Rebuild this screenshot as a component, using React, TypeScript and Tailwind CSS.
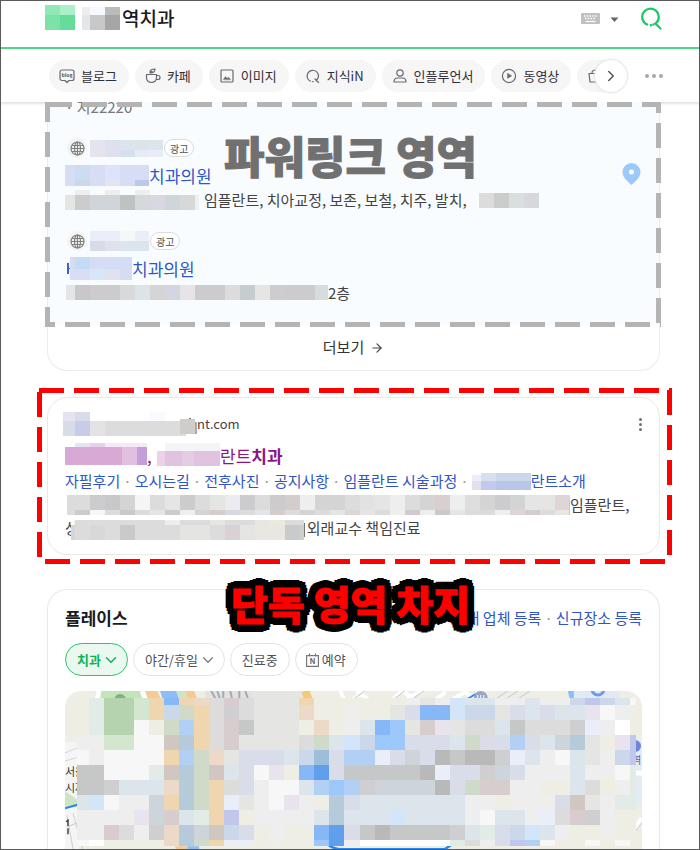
import React from "react";
import { ArrowRight, ChevronDown, ChevronRight } from "lucide-react";

type Block = [number, number, number, number, string];

function Mosaic({ w, h, blocks, className = "" }: { w: number; h: number; blocks: Block[]; className?: string }) {
  return (
    <svg width={w} height={h} className={"shrink-0 " + className} shapeRendering="crispEdges" aria-hidden="true">
      {blocks.map(([x, y, bw, bh, fill], i) => (
        <rect key={i} x={x} y={y} width={bw} height={bh} fill={fill} />
      ))}
    </svg>
  );
}

/* Turns a list of colours into 15px wide cells of one strip. */
function strip(colors: string[], y: number, h: number, first = 15): Block[] {
  return colors.map((c, i) => [i === 0 ? 0 : first + (i - 1) * 15, y, i === 0 ? first : 15, h, c]);
}

const stroke = { fill: "none", stroke: "#666a70", strokeWidth: 1.2, strokeLinecap: "round", strokeLinejoin: "round" } as const;

const BlogIcon = () => (
  <svg width="16" height="16" viewBox="0 0 16 16" {...stroke}>
    <path d="M3 2h10a2 2 0 0 1 2 2v6.500a2 2 0 0 1-2 2h-3L8 14.500 6 12.500H3a2 2 0 0 1-2-2V4a2 2 0 0 1 2-2z" />
    <text x="8" y="9" textAnchor="middle" fontSize="5" fontWeight="700" fill="#555" stroke="none">blog</text>
  </svg>
);
const CafeIcon = () => (
  <svg width="16" height="16" viewBox="0 0 16 16" {...stroke}>
    <path d="M1.500 6.500h10v3.500a5 4.500 0 0 1-10 0zM11.500 7.500h1.500a1.800 1.800 0 0 1 0 4h-1.800M5 4.800c-.5-2.500 1.500-4 5-3.800 0 2.600-1.600 3.900-5 3.800zM5 4.800l2-1.600" />
  </svg>
);
const ImageIcon = () => (
  <svg width="16" height="16" viewBox="0 0 16 16" {...stroke}>
    <rect x="2" y="2" width="12" height="12" rx="1" />
    <path d="M4.500 11.500l2-3 1.500 2 1.500-1.200 2 2.200z" fill="#666a70" strokeWidth="0.500" />
  </svg>
);
const KinIcon = () => (
  <svg width="16" height="16" viewBox="0 0 16 16" {...stroke}>
    <path d="M5.500 13.200a5.700 5.700 0 1 1 5.600-.6M10 11l3.500 3.500M7.600 13.600h.6" />
  </svg>
);
const PersonIcon = () => (
  <svg width="16" height="16" viewBox="0 0 16 16" {...stroke}>
    <circle cx="8" cy="5" r="3.200" />
    <path d="M5.500 10h5c2 0 3.500 1.500 3.500 4H2c0-2.500 1.500-4 3.500-4z" />
  </svg>
);
const VideoIcon = () => (
  <svg width="16" height="16" viewBox="0 0 16 16" {...stroke}>
    <circle cx="8" cy="8" r="6.600" />
    <path d="M6.700 5.800v4.400L10.300 8z" fill="#666a70" strokeWidth="0.800" />
  </svg>
);
const BagIcon = () => (
  <svg width="16" height="16" viewBox="0 0 16 16" {...stroke}>
    <path d="M2 5.500h12L13 14H3zM5 5.500C5 2.500 6.500 2 8 2s3 .5 3 3.500" />
  </svg>
);

const tabs = [
  { label: "블로그", icon: <BlogIcon /> },
  { label: "카페", icon: <CafeIcon /> },
  { label: "이미지", icon: <ImageIcon /> },
  { label: "지식iN", icon: <KinIcon /> },
  { label: "인플루언서", icon: <PersonIcon /> },
  { label: "동영상", icon: <VideoIcon /> },
];

function Header() {
  return (
    <header className="relative z-10 bg-white shadow-[0_2px_2px_#e3e3e8]">
      <form className="flex h-12 items-start border-b-2 border-[#4fd88a] pl-11 pr-[37px]" onSubmit={(e) => e.preventDefault()}>
        <Mosaic
          w={30}
          h={25}
          className="mt-1"
          blocks={[[0, 0, 15, 10, "#8fe8b5"], [15, 0, 15, 10, "#aaf0c8"], [0, 10, 15, 15, "#7be3a7"], [15, 10, 15, 15, "#66dc9b"]]}
        />
        <Mosaic
          w={38}
          h={23}
          className="ml-[7px] mt-1.5"
          blocks={[[0, 0, 8, 8, "#eeeeee"], [8, 0, 15, 8, "#f6f9fd"], [23, 0, 15, 8, "#bbbbbb"], [0, 8, 8, 15, "#e4e6ea"], [8, 8, 15, 15, "#c7c9c8"], [23, 8, 15, 15, "#a6a6a6"]]}
        />
        <input
          aria-label="검색어"
          defaultValue="역치과"
          className="ml-0.5 h-8 min-w-0 flex-1 bg-transparent text-[19px] font-medium text-[#1a1a22] outline-none"
        />
        <button type="button" aria-label="키보드" className="mt-3">
          <svg width="19" height="11" viewBox="0 0 19 11">
            <rect width="19" height="11" rx="1" fill="#c0c0c0" />
            <path d="M3 3h13M4 5.500h11" stroke="#fff" strokeWidth="1.300" strokeDasharray="1.500 1.300" />
            <path d="M4.500 8.500h10" stroke="#fff" strokeWidth="1.200" />
          </svg>
        </button>
        <button type="button" aria-label="자동완성" className="ml-2.5 mt-4">
          <svg width="9" height="6" viewBox="0 0 9 6"><path d="M.5 .5h8L4.500 5z" fill="#666" /></svg>
        </button>
        <button type="submit" aria-label="검색" className="ml-[21px] mt-1.5">
          <svg width="23" height="23" viewBox="0 0 23 23" fill="none" stroke="#1bc963" strokeWidth="2.200" strokeLinecap="round">
            <path d="M7.200 17.600A8.300 8.300 0 1 1 15.500 16.600L20.500 21.500" />
            <path d="M10.800 18.200h.1M13.400 17.600h.1" strokeWidth="2.500" />
          </svg>
        </button>
      </form>
      <nav className="flex h-[53px] items-center pl-12 pr-[37px]">
        <div className="flex min-w-0 flex-1 gap-1.5 overflow-hidden">
          {tabs.map((t) => (
            <a key={t.label} href="#" className="flex h-8 shrink-0 items-center gap-1.5 whitespace-nowrap rounded-full bg-[#f6f6f7] pl-2.5 pr-3 text-[13px] text-[#303038]">
              {t.icon}
              {t.label}
            </a>
          ))}
          <a href="#" aria-label="쇼핑" className="flex h-8 w-20 shrink-0 items-center rounded-full bg-[#f6f6f7] pl-2.5">
            <BagIcon />
          </a>
        </div>
        <button aria-label="다음" className="relative -ml-4 flex h-8 w-8 shrink-0 items-center justify-center rounded-full bg-white shadow-[0_0_2px_1px_#e2e3e8]">
          <ChevronRight size={18} color="#555" />
        </button>
        <button aria-label="더보기 메뉴" className="ml-[18px] flex shrink-0 gap-[3px]">
          <span className="h-1 w-1 rounded-full bg-[#a8a8ac]" />
          <span className="h-1 w-1 rounded-full bg-[#a8a8ac]" />
          <span className="h-1 w-1 rounded-full bg-[#a8a8ac]" />
        </button>
      </nav>
    </header>
  );
}

/* Dashed outline laid over a section: 25px dashes with 10px gaps. */
function DashFrame({ color, offsets }: { color: string; offsets: [number, number, number, number] }) {
  const common = { stroke: color, strokeWidth: 10, strokeDasharray: "25 10" };
  const [top, right, bottom, left] = offsets;
  return (
    <svg className="block" width="100%" height="100%" aria-hidden="true">
      <line x1="0" y1="0" x2="100%" y2="0" {...common} strokeDashoffset={top} />
      <line x1="100%" y1="0" x2="100%" y2="100%" {...common} strokeDashoffset={right} />
      <line x1="0" y1="100%" x2="100%" y2="100%" {...common} strokeDashoffset={bottom} />
      <line x1="0" y1="0" x2="0" y2="100%" {...common} strokeDashoffset={left} />
    </svg>
  );
}

function Globe() {
  return (
    <span className="flex h-5 w-5 items-center justify-center rounded-full bg-[#f3f3f3]">
      <svg width="15" height="15" viewBox="0 0 15 15" fill="none" stroke="#808080" strokeWidth="1.200">
        <circle cx="7.500" cy="7.500" r="6.500" />
        <ellipse cx="7.500" cy="7.500" rx="3" ry="6.500" />
        <path d="M7.500 1v13M1 7.500h13M2 4.500h11M2 10.500h11" />
      </svg>
    </span>
  );
}

function AdBadge() {
  return <span className="ml-px flex h-[18px] items-center rounded-full border border-[#dcdcdc] bg-white px-[5px] text-[10px] text-[#505050]">광고</span>;
}

function PowerLink() {
  return (
    <section className="relative z-20 rounded-b-[20px] border border-t-0 border-[#ececee]">
      <div className="relative flow-root h-[223px] overflow-hidden bg-[#f9fcff] pl-[17px] pr-4">
        <p className="-mt-1.5 text-[15px] leading-[22px] text-[#777]">· 지22220</p>
        <div className="flex items-center">
          <div className="min-w-0 flex-1 pt-[20px]">
            <div className="flex h-5 items-center pl-0.5">
              <Globe />
              <Mosaic
                w={73}
                h={17}
                className="ml-[3px]"
                blocks={[[0, 0, 15, 17, "#e5e3ee"], [15, 0, 16, 17, "#dde1ee"], [31, 0, 14, 10, "#dce5ed"], [31, 10, 14, 7, "#d5e0ea"], [45, 0, 15, 10, "#dde4e7"], [45, 10, 15, 7, "#e6ebf6"], [60, 0, 13, 10, "#dce5ed"], [60, 10, 13, 7, "#e8edf7"]]}
              />
              <AdBadge />
            </div>
            <a href="#" className="mt-[5px] flex h-[26px] items-center text-[17px] text-[#2f55c8]">
              <Mosaic
                w={84}
                h={21}
                className="mb-0.5"
                blocks={[[0, 0, 85, 21, "#d6ddf5"], [10, 0, 15, 15, "#cbdcf3"], [10, 15, 15, 6, "#cbd8e8"], [40, 0, 15, 15, "#dde3f8"], [40, 15, 15, 6, "#e6e3f0"], [70, 15, 15, 6, "#bdc9ec"]]}
              />
              치과의원
            </a>
            <p className="flex h-[22px] items-center whitespace-nowrap text-[15px] text-[#444]">
              <Mosaic
                w={135}
                h={20}
                className="mb-px"
                blocks={[...strip(["#e5e5e3", "#cccccd", "#cfd5d8", "#cfd5d8", "#bec2c1", "#d4d9da", "#d8d8e2", "#cfd5d8", "#d8d8d8"], 5, 15, 10), [130, 5, 4, 15, "#efefef"], [10, 0, 15, 5, "#eeeeee"], [40, 0, 15, 5, "#eeeeee"], [70, 0, 15, 5, "#eeeeee"]]}
              />
              <span className="ml-1 mr-3">임플란트, 치아교정, 보존, 보철, 치주, 발치,</span>
              <Mosaic w={60} h={15} blocks={strip(["#dcdcdd", "#cccccd", "#d9dede", "#d8d7de"], 0, 15)} />
            </p>
            <div className="mt-[20px] flex h-5 items-center pl-0.5">
              <Globe />
              <Mosaic
                w={59}
                h={20}
                className="ml-[3px]"
                blocks={[[0, 0, 59, 10, "#e9eef8"], [30, 0, 15, 10, "#f4f8f8"], [0, 10, 15, 10, "#d8dce9"], [15, 10, 15, 10, "#dfe1ed"], [30, 10, 29, 10, "#dce5ed"]]}
              />
              <AdBadge />
            </div>
            <a href="#" className="mt-[5px] flex h-[26px] items-center text-[17px] text-[#2f55c8]">
              <Mosaic
                w={67}
                h={23}
                className="mb-0.5"
                blocks={[[2, 6, 2, 11, "#3a60cf"], [4, 11, 2, 1, "#3a60cf"], [5, 0, 62, 23, "#d5dcf6"], [10, 0, 15, 12, "#c5daf5"], [5, 12, 20, 11, "#d9ddf5"], [25, 12, 15, 11, "#d6e7fa"], [40, 12, 15, 11, "#e2e1f0"]]}
              />
              치과의원
            </a>
            <p className="flex h-[22px] items-center whitespace-nowrap text-[15px] text-[#444]">
              <Mosaic
                w={262}
                h={15}
                className="mb-0.5 ml-px"
                blocks={strip(["#e3e5e6", "#c8c8ca", "#cccccf", "#cccccf", "#d7d9da", "#dde4e9", "#d5d5d5", "#d3d5e0", "#e6e4e8", "#cccccf", "#cccccf", "#dcdcdd", "#c5cdd1", "#e5e5e4", "#cdcdcf", "#cccccf", "#cccccf", "#d6dcdf"], 0, 15, 9)}
              />
              2층
            </p>
          </div>
          <svg width="19" height="22" viewBox="0 0 19 22" className="mb-[75px] mr-0.5 shrink-0">
            <path d="M9.500 0a9 9 0 0 1 9 9c0 5-4 8.500-9 13C4.500 17.500.5 14 .5 9a9 9 0 0 1 9-9z" fill="#9cc8fa" />
            <circle cx="9.500" cy="9" r="2.500" fill="#fff" />
          </svg>
        </div>
        <h2 className="absolute inset-x-0 top-[21px] whitespace-nowrap pr-1.5 text-center text-[44px] font-black leading-[64px] text-[#707070] [-webkit-text-stroke:1px_#707070]">
          파워링크 영역
        </h2>
      </div>
      <a href="#" className="flex h-[45px] items-center justify-center gap-1.5 text-[15px] text-[#333]">
        더보기 <ArrowRight size={14} color="#444" />
      </a>
      <div className="pointer-events-none absolute -left-[3px] -right-0.5 top-0 h-[225px] overflow-hidden">
        <DashFrame color="#b4b4b4" offsets={[33, 14, 15, 5]} />
      </div>
    </section>
  );
}

const sub = "text-[#2f55c8]";

function SiteResult() {
  return (
    <section className="relative mt-[26px] rounded-[20px] border border-[#e9e9ec] pb-[14px] pl-[17px] pr-4 pt-4">
      <div className="flex h-5 items-center text-[13px] text-[#444]">
        <Mosaic
          w={134}
          h={24}
          className="-ml-0.5"
          blocks={[[0, 0, 12, 9, "#e5e3ee"], [12, 0, 15, 9, "#d8dce9"], [87, 0, 15, 9, "#f7fbff"], [0, 9, 12, 15, "#d8dce9"], [12, 9, 15, 15, "#c9cce8"], [27, 9, 15, 15, "#e3e3e3"], [42, 9, 81, 15, "#dcdcdc"], [117, 7, 15, 15, "#cfccca"], [132, 10, 2, 12, "#aaaaaa"], [126, 6, 2, 1, "#777777"]]}
        />
        nt.com
        <button aria-label="메뉴" className="ml-auto mr-px flex flex-col gap-0.5">
          <span className="h-[3px] w-[3px] rounded-full bg-[#707070]" />
          <span className="h-[3px] w-[3px] rounded-full bg-[#707070]" />
          <span className="h-[3px] w-[3px] rounded-full bg-[#707070]" />
        </button>
      </div>
      <a href="#" className="mt-[9px] flex h-[26px] items-center text-[17px] text-[#8b1585]">
        <Mosaic
          w={82}
          h={22}
          className="mb-1"
          blocks={[[10, 0, 15, 4, "#e6e3f2"], [25, 0, 15, 4, "#e8d0ea"], [40, 0, 42, 4, "#f6e9f5"], [0, 4, 82, 18, "#d9a9d6"], [57, 4, 15, 18, "#e0bfe0"], [72, 4, 10, 18, "#c29fdb"]]}
        />
        <span className="w-[10px]">,</span>
        <Mosaic
          w={63}
          h={23}
          className="mb-1"
          blocks={[[8, 0, 55, 8, "#f5f4f6"], [0, 8, 63, 15, "#e0c2e1"], [0, 8, 8, 15, "#edd0ea"], [25, 8, 12, 15, "#e4cce5"]]}
        />
        란트<b>치과</b>
      </a>
      <div className={"flex h-6 items-center gap-[3px] whitespace-nowrap text-[15px] " + sub}>
        <a href="#">자필후기</a>
        <i className="text-[#999] not-italic">·</i>
        <a href="#">오시는길</a>
        <i className="text-[#999] not-italic">·</i>
        <a href="#">전후사진</a>
        <i className="text-[#999] not-italic">·</i>
        <a href="#">공지사항</a>
        <i className="text-[#999] not-italic">·</i>
        <a href="#">임플란트 시술과정</a>
        <i className="text-[#999] not-italic">·</i>
        <a href="#" className="flex items-center">
          <Mosaic
            w={59}
            h={17}
            blocks={[[0, 2, 9, 6, "#e9eef8"], [9, 0, 15, 8, "#d8e0f0"], [24, 0, 35, 8, "#cbd7ec"], [0, 8, 9, 9, "#e3e1ec"], [9, 8, 15, 9, "#c3c9ec"], [24, 8, 35, 9, "#b8c6e8"]]}
          />
          란트소개
        </a>
      </div>
      <p className="flex h-6 items-center whitespace-nowrap text-[15px] text-[#444]">
        <Mosaic
          w={503}
          h={20}
          className="ml-0.5"
          blocks={[
            ...strip(["#dcdcdd", "#dcdcdd", "#cccccf", "#c6c8c9", "#d4d4d4", "#f5f5f5", "#dcdcdd", "#e5e5e3", "#cccccf", "#dcdcdd", "#e5e5e3", "#ececf0", "#cccccf", "#dcdcdd", "#cccccf", "#d5cccc", "#eeeeee", "#d4d4d4", "#d4d4d4", "#dcdcdd", "#e2e2e2", "#e5e5e3", "#eeeeee", "#dcdcdd", "#d4d4d4", "#dacfcf", "#eeeeee", "#dedede", "#d4d4d4", "#cccccf", "#d4d4d4", "#e5e5e5", "#e5e5e3", "#ddd5d6"], 0, 15, 8),
            ...strip(["#dcdcdd", "#cccccf", "#f6f6f6", "#dcdcdd", "#c9c9c9", "#dcdcdd", "#e5e5e3", "#cccccf", "#eeeeee", "#d4d4d4", "#d5cccc", "#d8d8e2", "#dcdcdd", "#e2e5ea", "#d5cccc", "#dcdcdd", "#d4d4d4", "#dcdcdd", "#e5e5e5", "#ddd5d6", "#e5e5e3", "#dcdcdd", "#eeeeee", "#d3c9d3", "#eeeeee", "#c9c9cb", "#e5e5e3", "#dcdcdd", "#dcdcdd", "#eeeeee", "#ddd5d6", "#d5cccc", "#dcdcdd", "#e8e6df"], 15, 5, 8),
            [502, 5, 1, 15, "#9dd8f8"],
          ]}
        />
        임플란트,
      </p>
      <p className="flex h-[23px] items-center whitespace-nowrap text-[15px] text-[#444]">
        상
        <Mosaic
          w={234}
          h={20}
          className="-ml-2 mt-0.5"
          blocks={[
            [0, 5, 4, 15, "#d5d5df"],
            [4, 0, 229, 20, "#dcdcdd"],
            [19, 5, 15, 15, "#d8d8d8"],
            [49, 5, 15, 15, "#c9cac9"],
            [94, 0, 15, 5, "#eeeeee"],
            [109, 5, 30, 15, "#e4e4e2"],
            [139, 0, 15, 5, "#e5e5e3"],
            [154, 5, 15, 15, "#d9d1d3"],
            [169, 5, 15, 15, "#e5e5e3"],
            [184, 0, 30, 20, "#e8e7e2"],
            [199, 0, 15, 5, "#ebebdd"],
            [214, 5, 15, 15, "#c9cacc"],
            [229, 5, 4, 15, "#ccd3c6"],
            [233, 3, 1, 14, "#777777"],
          ]}
        />
        <span className="ml-0.5">외래교수 책임진료</span>
      </p>
      <div className="pointer-events-none absolute -bottom-[10px] -left-[11px] -right-[13px] -top-[10px] z-20 overflow-hidden">
        <DashFrame color="#ff0000" offsets={[33, 33, 27, 31]} />
      </div>
    </section>
  );
}

const palette: Record<string, string> = {
  a: "#eeeeee", b: "#e1ece6", c: "#b5d3ae", d: "#d2e7cd", e: "#f0d6af", f: "#9cc8fc", g: "#cfdbc8", h: "#dcdcdc",
  i: "#cfcfd2", j: "#e5e5e4", k: "#f7f7f7", l: "#dde5ec", m: "#d9dce9", n: "#cbd8ea", o: "#b1d0f4", p: "#86b8f8",
  q: "#609fec", r: "#b6cbd9", s: "#c6c8c7", t: "#b9b9b9", u: "#efeee5", v: "#d0c7c0", w: "#ecd9c8", x: "#d7cdce",
  y: "#e9eef8", z: "#ffffff", A: "#9dbedb", B: "#cdd5da", L: "#d3e6f9", M: "#e8e3ec", P: "#c1c7ea",
};

const mapRows = [
  "ubccdepewhxhjjjeuuuuuuajaLllaalaanPnlk",
  "ubccdengehihjjjwuuauujmppLnnjmlmllMkau",
  "ubcckugoehxsjjjuwualpfjxMjhhlshhhiyazu",
  "aaddkkvrehxjjjjhglLnffmmmlgmmomlBrjuMP",
  "kakkkkeogwjmmmlnAmooymBmtsttiylakljanP",
  "sskkkbvrgvlmkMupqmssssstymmiBmaaalaakb",
  "ssilllwrgehmakklofoiBBBBtmgxxaauulhuab",
  "lLkaaBergeyjakMaurmlllllllaauaaamvjabb",
  "aaaaMBxlbePuaaaalrlllLllllakllayhxiauu",
  "aaxhaiwrBvnmuauupqmstssssilbmnLlauuauu",
  "kzuuuuwrgeyyuauufqazzzzzzbhamPokuukuku",
];
const rowTops = [7, 14, 29, 44, 59, 74, 89, 104, 119, 134, 149, 155];

function MapPreview() {
  return (
    <svg width="576" height="170" className="mt-[15px] w-full rounded-t-2xl" viewBox="0 0 576 170" preserveAspectRatio="xMidYMin slice" fill="none" role="img" aria-label="지도">
      <rect width="576" height="170" fill="#efeee5" />
      <path d="M36 0h40l10 14H34z" fill="#c3e3ba" />
      <circle cx="55" cy="9" r="6" fill="#7fb384" />
      <path d="M31 14 34 0M82 14 77 0" stroke="#fff" strokeWidth="5" />
      <path d="M80 0h12l6 14H85z" fill="#f6ca90" />
      <path d="M95 0h16l5 14H99z" fill="#8dbdf8" />
      <path d="M111 0h9l5 14h-8z" fill="#cde5c2" />
      <path d="M120 0h9l5 14h-9z" fill="#f6ca90" />
      <path d="M140 0h48v12h-48z" fill="#e2e2e2" />
      <path d="M146 0l5 9M152 0l3 9M158 0v9M165 0l2 9M174 0v9M180 0l3 9" stroke="#a9a9ae" strokeWidth="2" />
      <path d="M188 0h50v12h-50z" fill="#e5e5e4" />
      <path d="M240 0l5 14" stroke="#f3c878" strokeWidth="8" />
      <path d="M275 0l4 10M286 10l12-10M291 0l14 10M325 10l12-10 14 10M342 8l14-8M370 9l10-8M384 10l14-8M398 0l12 9" stroke="#fff" strokeWidth="4" />
      <path d="M287 9l12-9M326 10l13-10M344 10l14-10M430 8l12-8M440 8l12-8M452 8l12-8" stroke="#cdcdd0" strokeWidth="1" />
      <path d="M400 9l10-6" stroke="#2488f8" strokeWidth="2" />
      <circle cx="415" cy="7" r="7" fill="#9aa6c5" />
      <path d="M411 8h8M412 4v5M415 4v5M418 4v5" stroke="#fff" />
      <path d="M504 0h50v10h-50z" fill="#e1eaf2" />
      <circle cx="532" cy="-2" r="6" stroke="#6d9aee" strokeWidth="3" />
      <path d="M502 0h6v9h-4z" fill="#8dbdf8" />
      <path d="M0 51h14v119H0z" fill="#f5f5f5" />
      <path d="M0 70l14-4M0 62l14-6" stroke="#d5d5d5" />
      <path d="M0 100l12 8v8H0z" fill="#cde5c2" />
      <path d="M0 117l14-4" stroke="#2488f8" strokeWidth="2" />
      <path d="M2 124l8 45M8 122l12 45M4 135l14-6" stroke="#cfcfcf" />
      <path d="M3 128v7M1 130h2M3 137v6" stroke="#444" strokeWidth="1.500" />
      <text x="0" y="85" fontSize="11" fill="#333">서울</text>
      <text x="0" y="101" fontSize="11" fill="#333">시자</text>
      <path d="M558 50h18v65h-18z" fill="#e3ebf3" />
      <path d="M560 82h16" stroke="#fff" strokeWidth="5" />
      <circle cx="569" cy="55" r="6" fill="#6d86dc" />
      <text x="566" y="73" fontSize="10" fill="#5968b8">역</text>
      <path d="M558 153l18-26" stroke="#fff" strokeWidth="5" />
      <path d="M560 153l16-22" stroke="#ccc" />
      <path d="M110 155h12l4 14h-14z" fill="#f6ca90" />
      <path d="M122 155h12v14h-10z" fill="#8dbdf8" />
      <path d="M262 153q6 5 14 5h103l6-4" stroke="#2488f8" strokeWidth="2.500" />
      <g shapeRendering="crispEdges">
        {mapRows.map((row, r) =>
          row.split("").map((ch, c) => (
            <rect
              key={`${r}-${c}`}
              x={c === 0 ? 12 : 24 + (c - 1) * 15}
              y={rowTops[r]}
              width={c === 0 ? 12 : c === 37 ? 6 : 15}
              height={rowTops[r + 1] - rowTops[r]}
              fill={palette[ch]}
            />
          ))
        )}
      </g>
    </svg>
  );
}

const chip = "flex h-[33px] items-center whitespace-nowrap rounded-full border border-[#e3e3e6] text-[13px] text-[#505055]";

function Place() {
  return (
    <section className="relative mt-[34px] rounded-t-[20px] border border-b-0 border-[#e9e9ec] px-[17px] pt-[14px]">
      <div className="flex h-7 items-center justify-between">
        <h2 className="text-[17px] font-bold text-[#1a1a22]">플레이스</h2>
        <div className={"flex items-center gap-[3px] text-[15px] " + sub}>
          <a href="#">내 업체 등록</a>
          <i className="text-[#999] not-italic">·</i>
          <a href="#">신규장소 등록</a>
        </div>
      </div>
      <div className="mt-[11px] flex gap-[5px]">
        <button className="flex h-[33px] items-center gap-1 rounded-full border border-[#2fc26e] bg-[#ebf8f0] pl-[11px] pr-2.5 text-[13px] font-bold text-[#0fb457]">
          치과 <ChevronDown size={18} className="-mx-[3px]" />
        </button>
        <button className={chip + " gap-1 pl-[11px] pr-2.5"}>
          야간/휴일 <ChevronDown size={18} color="#777" strokeWidth={1.5} className="-mx-[3px]" />
        </button>
        <button className={chip + " px-[11px]"}>진료중</button>
        <button className={chip + " gap-[3px] pl-2.5 pr-[11px]"}>
          <svg width="13" height="14" viewBox="0 0 13 14" fill="none" stroke="#77777c" strokeWidth="1.200">
            <path d="M.6 2.600h11.800v10.800H.6zM3.500 .5v3M9.500 .5v3" />
            <text x="6.500" y="11" textAnchor="middle" fontSize="8" fontWeight="700" fill="#66666a" stroke="none">N</text>
          </svg>
          예약
        </button>
      </div>
      <MapPreview />
      <strong className="absolute inset-x-0 -top-[19px] whitespace-nowrap pr-1.5 text-center text-[40px] font-black leading-[64px] text-[#ff0000] [-webkit-text-stroke:1px_#ff0000] [text-shadow:8px_0_#000,-8px_0_#000,0_8px_#000,0_-8px_#000,6px_6px_#000,-6px_6px_#000,6px_-6px_#000,-6px_-6px_#000,7px_3px_#000,-7px_3px_#000,7px_-3px_#000,-7px_-3px_#000,3px_7px_#000,-3px_7px_#000,3px_-7px_#000,-3px_-7px_#000,3px_3px_#000,-3px_3px_#000,3px_-3px_#000,-3px_-3px_#000]">
        단독 영역 차지
      </strong>
    </section>
  );
}

export default function App() {
  return (
    <div className="relative h-screen overflow-hidden bg-white pl-px pt-px font-['Noto_Sans_CJK_KR','Liberation_Sans',sans-serif] after:pointer-events-none after:absolute after:inset-0 after:z-30 after:border after:border-[#5a5a5a]">
      <Header />
      <main className="pl-[46px] pr-10">
        <PowerLink />
        <SiteResult />
        <Place />
      </main>
    </div>
  );
}
